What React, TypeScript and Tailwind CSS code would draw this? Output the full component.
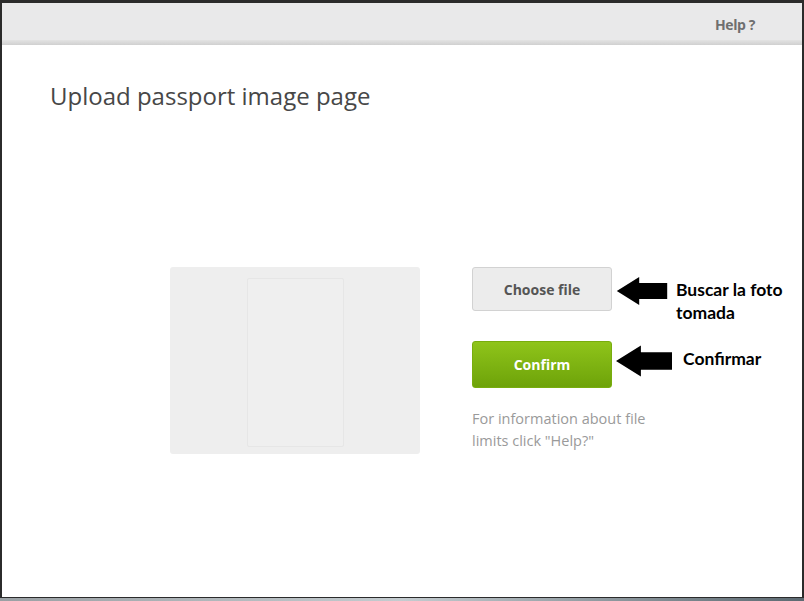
import React from "react";

function ArrowLeft({ className }: { className?: string }) {
    return (
        <svg className={className} viewBox="0 0 54 30" fill="#000">
            <path d="M0 15 L24 0 L24 6.5 L54 6.5 L54 23.5 L24 23.5 L24 30 Z" />
        </svg>
    );
}

export default function App() {
    return (
        <div className="w-[804px] h-[601px] bg-[#2b2b2b] flex flex-col overflow-hidden font-['Open_Sans',sans-serif]">
            <div className="mt-[3px] mx-[2px] flex-1 bg-white flex flex-col">
                {/* header bar */}
                <div className="h-[42px] flex flex-col bg-[#e9e9ea]">
                    <div className="flex-1 flex items-center justify-end pr-[47px] pt-[5px]">
                        <span className="text-[14px] font-bold text-[#6f6f6f] tracking-[-0.4px]">Help ?</span>
                    </div>
                    <div className="h-[5px] bg-gradient-to-b from-[#e3e3e3] to-[#d0d0d0]"></div>
                </div>

                <h1 className="mt-[35px] ml-[48px] text-[24px] leading-[32px] text-[#474747] font-normal">
                    Upload passport image page
                </h1>

                <div className="mt-[155px] ml-[168px] flex items-start">
                    <div className="w-[250px] h-[187px] bg-[#eeeeee] rounded-[3px] flex justify-center pt-[11px]">
                        <div className="w-[97px] h-[169px] border border-[#e6e6e6] rounded-[2px] bg-[#efefef]"></div>
                    </div>

                    <div className="ml-[52px] flex flex-col">
                        <div className="flex items-start">
                            <button className="w-[140px] h-[44px] rounded-[3px] border border-[#d2d2d2] bg-[#ececec] text-[14px] font-bold text-[#555]">
                                Choose file
                            </button>
                            <ArrowLeft className="w-[52px] h-[28px] ml-[4px] mt-[10px]" />
                            <div className="ml-[8px] mt-[11px] text-[17.5px] leading-[23px] font-bold text-black font-['Lato',sans-serif]">
                                Buscar la foto
                                <br />
                                tomada
                            </div>
                        </div>

                        <div className="flex items-start mt-[17px]">
                            <button className="w-[140px] h-[47px] rounded-[3px] border border-[#78ad0e] bg-gradient-to-b from-[#8fc41a] to-[#6ea309] text-[14px] font-bold text-white">
                                Confirm
                            </button>
                            <ArrowLeft className="w-[56px] h-[32px] ml-[4px] mt-[4px]" />
                            <div className="ml-[11px] mt-[6px] text-[17.5px] leading-[23px] font-bold text-black font-['Lato',sans-serif]">
                                Confirmar
                            </div>
                        </div>

                        <p className="mt-[20px] text-[14.5px] leading-[22px] text-[#9a9a9a]">
                            For information about file
                            <br />
                            limits click "Help?"
                        </p>
                    </div>
                </div>
            </div>
            <div className="h-[1px] bg-[#2b2b2b]"></div>
            <div className="h-[3px] bg-gradient-to-r from-[#9aa0a4] via-[#c4ccd0] to-[#5d6a72]"></div>
        </div>
    );
}
